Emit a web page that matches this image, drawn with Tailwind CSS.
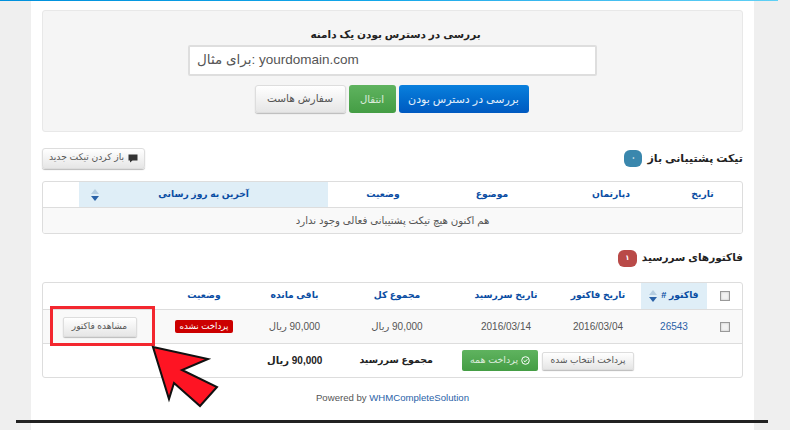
<!DOCTYPE html>
<html lang="fa" dir="rtl">
<head>
  <meta charset="UTF-8">
  <title>فاکتورهای سررسید</title>
  <script src="https://cdn.jsdelivr.net/npm/@tailwindcss/browser@4"></script>
</head>
<body class="w-[790px] h-[430px] overflow-hidden relative bg-[#efefef] font-[Liberation_Sans,DejaVu_Sans,sans-serif] text-[#333]">

  <!-- top line -->
  <div class="h-px w-[778px] ml-auto mr-[12px] bg-gradient-to-l from-[#5fd0f5] via-[#14a8ea] to-[#0090dc]" dir="ltr"></div>

  <div class="flex flex-col h-[419px] w-[723px] mr-[36px] bg-white px-[11px] pt-[9px]">

    <!-- domain check -->
    <div class="h-[122px] bg-[#f5f5f5] border border-[#e8e8e8] rounded-[3px] flex flex-col items-center pt-[16px]">
      <h3 class="h-[14px] leading-[14px] ml-[6px] text-[10.500px] font-bold text-[#222]">بررسی در دسترس بودن یک دامنه</h3>
      <div class="mt-[4px] w-[409px] h-[31px] bg-white border-2 border-[#dedede] rounded-[2px] flex items-center px-[7px] text-[#555] text-[13.500px]" dir="ltr">برای مثال: yourdomain.com</div>
      <div class="mt-[9px] mr-[2px] flex gap-[3px]">
        <button class="w-[130px] h-[28px] rounded-[3px] bg-gradient-to-b from-[#0a80dd] to-[#0059c0] text-white/90 text-[11px]">بررسی در دسترس بودن</button>
        <button class="w-[47px] h-[28px] rounded-[3px] bg-gradient-to-b from-[#5fb35f] to-[#449d44] text-white/80 text-[10px]">انتقال</button>
        <button class="w-[91px] h-[28px] rounded-[3px] border border-[#ddd] shadow-[0_1px_1px_#bbb] bg-gradient-to-b from-white to-[#e6e6e6] text-[#555] text-[10.500px]">سفارش هاست</button>
      </div>
    </div>

    <!-- tickets -->
    <div class="mt-[15px] h-[22px] flex items-center justify-between">
      <div class="flex items-center gap-[5px]">
        <h3 class="text-[11px] font-bold text-[#222]">تیکت پشتیبانی باز</h3>
        <span class="w-[18px] h-[17px] rounded-[6px] bg-[#3a87ad] text-white text-[7px] font-bold flex items-center justify-center">۰</span>
      </div>
      <button class="w-[103px] h-[21px] rounded-[3px] border border-[#ddd] shadow-[0_1px_1px_#bbb] bg-gradient-to-b from-white to-[#e6e6e6] text-[#555] text-[9.200px] flex items-center justify-center gap-[4px]">
        <svg width="10" height="9" viewBox="0 0 10 9"><path d="M0.5 0.5h9v6h-5l-2.5 2v-2h-1.500z" fill="#333"/></svg>
        <span>باز کردن تیکت جدید</span>
      </button>
    </div>
    <div class="mt-[12px] h-[53px] border border-[#ddd] rounded-[3px] overflow-hidden">
      <div class="h-[26px] grid grid-cols-[79px_104px_134px_97px_249px_1fr] items-center text-center text-[9.200px] font-bold text-[#0a4da3] border-b border-[#ddd]">
        <div>تاریخ</div>
        <div>دپارتمان</div>
        <div>موضوع</div>
        <div class="pl-[13px]">وضعیت</div>
        <div class="h-full bg-[#dfeef7] flex items-center justify-between pl-[12px] pr-[79px]">
          <span>آخرین به روز رسانی</span>
          <svg width="8" height="12" viewBox="0 0 8 12"><path d="M4 0l4 5h-8z" fill="#b5cde0"/><path d="M4 12l4-5h-8z" fill="#2a62a8"/></svg>
        </div>
        <div></div>
      </div>
      <div class="h-[26px] bg-[#f9f9f9] flex items-center justify-center text-[#555] text-[10.200px]">هم اکنون هیچ تیکت پشتیبانی فعالی وجود ندارد</div>
    </div>

    <!-- invoices -->
    <div class="mt-[14px] h-[20px] flex items-center gap-[5px]">
      <h3 class="text-[10.500px] font-bold text-[#222]">فاکتورهای سررسید</h3>
      <span class="w-[19px] h-[17px] rounded-[6px] bg-[#b94a48] text-white text-[7px] font-bold flex items-center justify-center">۱</span>
    </div>
    <div class="mt-[14px] h-[96px] border border-[#ddd] rounded-[3px] overflow-hidden">
      <div class="h-[27px] grid grid-cols-[35px_66px_86px_98px_120px_85px_96px_1fr] items-center text-center text-[9.200px] font-bold text-[#0a4da3] border-b border-[#ddd]">
        <div class="flex justify-center"><span class="w-[10px] h-[10px] border border-[#999] bg-[#f2f2f2] shadow-[inset_0_0_2px_#bbb]"></span></div>
        <div class="h-full bg-[#dfeef7] flex items-center justify-center gap-[4px]">
          <span>فاکتور #</span>
          <svg width="8" height="12" viewBox="0 0 8 12"><path d="M4 0l4 5h-8z" fill="#b5cde0"/><path d="M4 12l4-5h-8z" fill="#2a62a8"/></svg>
        </div>
        <div>تاریخ فاکتور</div>
        <div>تاریخ سررسید</div>
        <div>مجموع کل</div>
        <div>باقی مانده</div>
        <div>وضعیت</div>
        <div></div>
      </div>
      <div class="h-[34px] grid grid-cols-[35px_66px_86px_98px_120px_85px_96px_1fr] items-center text-center bg-[#f9f9f9] text-[#555] border-b border-[#ddd] text-[10px]">
        <div class="flex justify-center"><span class="w-[10px] h-[10px] border border-[#999] bg-[#f2f2f2] shadow-[inset_0_0_2px_#bbb]"></span></div>
        <div class="text-[#2a62a8]">26543</div>
        <div>2016/03/04</div>
        <div>2016/03/14</div>
        <div>90,000 ریال</div>
        <div>90,000 ریال</div>
        <div class="flex justify-center"><span class="w-[58px] h-[13px] leading-[13px] rounded-[2px] bg-[#cc0000] text-white text-[8.700px]">پرداخت نشده</span></div>
        <div class="flex justify-center"><button class="w-[74px] h-[20px] rounded-[2px] border border-[#ddd] shadow-[0_1px_1px_#bbb] bg-gradient-to-b from-white to-[#e6e6e6] text-[#555] text-[9px]">مشاهده فاکتور</button></div>
      </div>
      <div class="h-[33px] flex items-center text-[9.500px] font-bold text-[#222]">
        <button class="mr-[108px] w-[92px] h-[18px] rounded-[2px] border border-[#ddd] shadow-[0_1px_1px_#bbb] bg-gradient-to-b from-white to-[#e6e6e6] text-[#555] text-[9px] font-normal">پرداخت انتخاب شده</button>
        <button class="mr-[4px] w-[76px] h-[21px] rounded-[2px] bg-gradient-to-b from-[#5fb35f] to-[#449d44] text-white/80 text-[9.500px] font-normal flex items-center justify-center gap-[3px]">
          <svg width="9" height="9" viewBox="0 0 9 9" fill="none" stroke="#fff"><circle cx="4.500" cy="4.500" r="3.800"/><path d="M2.700 4.500l1.300 1.300l2.300-2.500"/></svg>
          <span>پرداخت همه</span>
        </button>
        <span class="mr-[29px]">مجموع سررسید</span>
        <span class="mr-[37px] text-[10px]">90,000 ریال</span>
      </div>
    </div>

    <p class="mt-[14px] h-[12px] leading-[12px] text-[9.600px] text-[#555] text-center" dir="ltr">Powered by <span class="text-[#2a62a8]">WHMCompleteSolution</span></p>
  </div>

  <!-- bottom line -->
  <div class="h-[3px] w-[752px] ml-[16px] mr-auto bg-[#222]" dir="ltr"></div>
  <div class="h-[7px] w-[723px] mr-[36px] bg-white"></div>

  <!-- annotation over the invoice table -->
  <div class="absolute left-[50px] top-[306px] w-[105px] h-[40px] border-[3px] border-[#f3272f]"></div>
  <svg class="absolute left-0 top-0" width="790" height="430"><polygon points="153,347 208,359 182,370 217,387 200,406 174,383 169,399" fill="#fe1423" stroke="#111" stroke-width="2"/></svg>
</body>
</html>
